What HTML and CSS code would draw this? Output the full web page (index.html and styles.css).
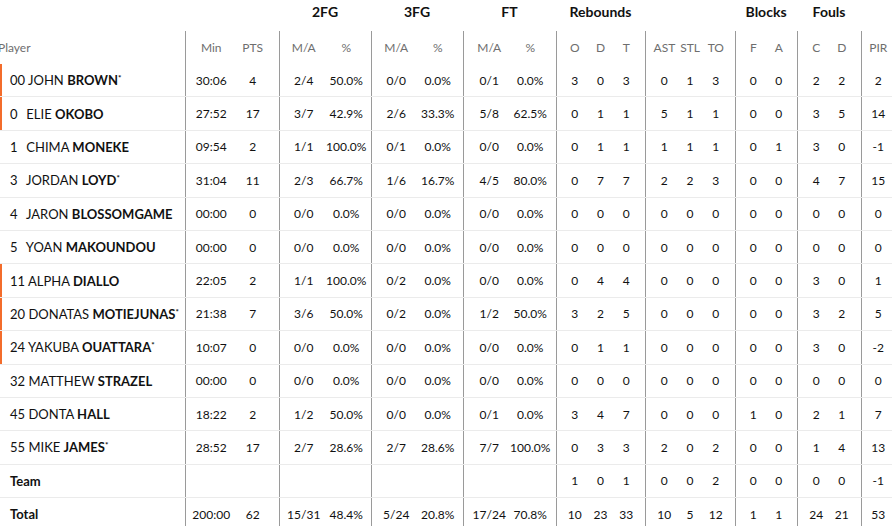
FILE: index.html
```html
<!DOCTYPE html>
<html lang="en">
<head>
<meta charset="utf-8">
<title>Box score</title>
<link rel="stylesheet" href="styles.css">
</head>
<body>
<table class="box">
  <colgroup>
    <col class="w-player">
    <col class="w47"><col class="w47">
    <col class="w46"><col class="w46">
    <col class="w46"><col class="w46">
    <col class="w47"><col class="w46">
    <col class="w30"><col class="w29"><col class="w30">
    <col class="w30"><col class="w30"><col class="w30">
    <col class="w31"><col class="w31">
    <col class="w32"><col class="w32">
    <col class="w40">
  </colgroup>
  <thead>
    <tr class="groups">
      <th></th>
      <th colspan="2"></th>
      <th colspan="2">2FG</th>
      <th colspan="2">3FG</th>
      <th colspan="2">FT</th>
      <th colspan="3">Rebounds</th>
      <th colspan="3"></th>
      <th colspan="2">Blocks</th>
      <th colspan="2">Fouls</th>
      <th></th>
    </tr>
    <tr class="labels">
      <th class="player">Player</th>
      <th>Min</th><th>PTS</th>
      <th>M/A</th><th>%</th>
      <th>M/A</th><th>%</th>
      <th>M/A</th><th>%</th>
      <th>O</th><th>D</th><th>T</th>
      <th>AST</th><th>STL</th><th>TO</th>
      <th>F</th><th>A</th>
      <th>C</th><th>D</th>
      <th>PIR</th>
    </tr>
  </thead>
  <tbody>
    <tr class="on">
      <td class="name"><span class="num">00</span> JOHN <b>BROWN</b><sup>*</sup></td>
      <td>30:06</td><td>4</td><td>2/4</td><td>50.0%</td><td>0/0</td><td>0.0%</td><td>0/1</td><td>0.0%</td>
      <td>3</td><td>0</td><td>3</td><td>0</td><td>1</td><td>3</td><td>0</td><td>0</td><td>2</td><td>2</td><td>2</td>
    </tr>
    <tr class="on">
      <td class="name"><span class="num">0</span> ELIE <b>OKOBO</b></td>
      <td>27:52</td><td>17</td><td>3/7</td><td>42.9%</td><td>2/6</td><td>33.3%</td><td>5/8</td><td>62.5%</td>
      <td>0</td><td>1</td><td>1</td><td>5</td><td>1</td><td>1</td><td>0</td><td>0</td><td>3</td><td>5</td><td>14</td>
    </tr>
    <tr>
      <td class="name"><span class="num">1</span> CHIMA <b>MONEKE</b></td>
      <td>09:54</td><td>2</td><td>1/1</td><td>100.0%</td><td>0/1</td><td>0.0%</td><td>0/0</td><td>0.0%</td>
      <td>0</td><td>1</td><td>1</td><td>1</td><td>1</td><td>1</td><td>0</td><td>1</td><td>3</td><td>0</td><td>-1</td>
    </tr>
    <tr>
      <td class="name"><span class="num">3</span> JORDAN <b>LOYD</b><sup>*</sup></td>
      <td>31:04</td><td>11</td><td>2/3</td><td>66.7%</td><td>1/6</td><td>16.7%</td><td>4/5</td><td>80.0%</td>
      <td>0</td><td>7</td><td>7</td><td>2</td><td>2</td><td>3</td><td>0</td><td>0</td><td>4</td><td>7</td><td>15</td>
    </tr>
    <tr>
      <td class="name"><span class="num">4</span> JARON <b>BLOSSOMGAME</b></td>
      <td>00:00</td><td>0</td><td>0/0</td><td>0.0%</td><td>0/0</td><td>0.0%</td><td>0/0</td><td>0.0%</td>
      <td>0</td><td>0</td><td>0</td><td>0</td><td>0</td><td>0</td><td>0</td><td>0</td><td>0</td><td>0</td><td>0</td>
    </tr>
    <tr>
      <td class="name"><span class="num">5</span> YOAN <b>MAKOUNDOU</b></td>
      <td>00:00</td><td>0</td><td>0/0</td><td>0.0%</td><td>0/0</td><td>0.0%</td><td>0/0</td><td>0.0%</td>
      <td>0</td><td>0</td><td>0</td><td>0</td><td>0</td><td>0</td><td>0</td><td>0</td><td>0</td><td>0</td><td>0</td>
    </tr>
    <tr class="on">
      <td class="name"><span class="num">11</span> ALPHA <b>DIALLO</b></td>
      <td>22:05</td><td>2</td><td>1/1</td><td>100.0%</td><td>0/2</td><td>0.0%</td><td>0/0</td><td>0.0%</td>
      <td>0</td><td>4</td><td>4</td><td>0</td><td>0</td><td>0</td><td>0</td><td>0</td><td>3</td><td>0</td><td>1</td>
    </tr>
    <tr class="on">
      <td class="name"><span class="num">20</span> DONATAS <b>MOTIEJUNAS</b><sup>*</sup></td>
      <td>21:38</td><td>7</td><td>3/6</td><td>50.0%</td><td>0/2</td><td>0.0%</td><td>1/2</td><td>50.0%</td>
      <td>3</td><td>2</td><td>5</td><td>0</td><td>0</td><td>0</td><td>0</td><td>0</td><td>3</td><td>2</td><td>5</td>
    </tr>
    <tr class="on">
      <td class="name"><span class="num">24</span> YAKUBA <b>OUATTARA</b><sup>*</sup></td>
      <td>10:07</td><td>0</td><td>0/0</td><td>0.0%</td><td>0/0</td><td>0.0%</td><td>0/0</td><td>0.0%</td>
      <td>0</td><td>1</td><td>1</td><td>0</td><td>0</td><td>0</td><td>0</td><td>0</td><td>3</td><td>0</td><td>-2</td>
    </tr>
    <tr>
      <td class="name"><span class="num">32</span> MATTHEW <b>STRAZEL</b></td>
      <td>00:00</td><td>0</td><td>0/0</td><td>0.0%</td><td>0/0</td><td>0.0%</td><td>0/0</td><td>0.0%</td>
      <td>0</td><td>0</td><td>0</td><td>0</td><td>0</td><td>0</td><td>0</td><td>0</td><td>0</td><td>0</td><td>0</td>
    </tr>
    <tr>
      <td class="name"><span class="num">45</span> DONTA <b>HALL</b></td>
      <td>18:22</td><td>2</td><td>1/2</td><td>50.0%</td><td>0/0</td><td>0.0%</td><td>0/1</td><td>0.0%</td>
      <td>3</td><td>4</td><td>7</td><td>0</td><td>0</td><td>0</td><td>1</td><td>0</td><td>2</td><td>1</td><td>7</td>
    </tr>
    <tr>
      <td class="name"><span class="num">55</span> MIKE <b>JAMES</b><sup>*</sup></td>
      <td>28:52</td><td>17</td><td>2/7</td><td>28.6%</td><td>2/7</td><td>28.6%</td><td>7/7</td><td>100.0%</td>
      <td>0</td><td>3</td><td>3</td><td>2</td><td>0</td><td>2</td><td>0</td><td>0</td><td>1</td><td>4</td><td>13</td>
    </tr>
    <tr>
      <td class="name"><b>Team</b></td>
      <td></td><td></td><td></td><td></td><td></td><td></td><td></td><td></td>
      <td>1</td><td>0</td><td>1</td><td>0</td><td>0</td><td>2</td><td>0</td><td>0</td><td>0</td><td>0</td><td>-1</td>
    </tr>
    <tr>
      <td class="name"><b>Total</b></td>
      <td>200:00</td><td>62</td><td>15/31</td><td>48.4%</td><td>5/24</td><td>20.8%</td><td>17/24</td><td>70.8%</td>
      <td>10</td><td>23</td><td>33</td><td>10</td><td>5</td><td>12</td><td>1</td><td>1</td><td>24</td><td>21</td><td>53</td>
    </tr>
  </tbody>
</table>
</body>
</html>
```

FILE: styles.css
```css
html, body {
  margin: 0;
  padding: 0;
  background: #fff;
  overflow: hidden;
}

body {
  font-family: Lato, "Liberation Sans", sans-serif;
  color: #111;
}

.box {
  border-collapse: collapse;
  table-layout: fixed;
  width: 901px;
}

.w-player { width: 185px; }
.w47 { width: 47px; }
.w46 { width: 46px; }
.w40 { width: 40px; }
.w32 { width: 32px; }
.w31 { width: 31px; }
.w30 { width: 30px; }
.w29 { width: 29px; }

.box th,
.box td {
  padding: 0;
  text-align: center;
  white-space: nowrap;
}

/* group header row */
.groups th {
  height: 28px;
  padding-top: 3px;
  font-size: 14px;
  line-height: 17px;
  font-weight: 700;
  color: #111;
  vertical-align: top;
}

/* labels row */
.labels th {
  height: 33px;
  font-size: 12px;
  font-weight: 400;
  color: #6e6e6e;
}

.labels th.player {
  text-align: left;
  text-indent: -2px;
}

/* body rows */
.box tbody td {
  height: 32.4px;
  font-size: 12px;
  border-bottom: 1px solid #ebebeb;
}

.box td.name {
  text-align: left;
  padding-left: 10px;
  font-size: 13px;
}

.name b {
  font-weight: 700;
}

.num {
  display: inline-block;
  min-width: 13px;
}

.name sup {
  font-size: 8px;
  font-weight: 700;
  vertical-align: 4px;
}

.on td.name {
  background: linear-gradient(to right, #f36c2b 0, #f36c2b 2.5px, transparent 2.5px);
}

/* vertical group dividers */
.labels th:nth-child(2), .box tbody td:nth-child(2),
.labels th:nth-child(4), .box tbody td:nth-child(4),
.labels th:nth-child(6), .box tbody td:nth-child(6),
.labels th:nth-child(8), .box tbody td:nth-child(8),
.labels th:nth-child(10), .box tbody td:nth-child(10),
.labels th:nth-child(13), .box tbody td:nth-child(13),
.labels th:nth-child(16), .box tbody td:nth-child(16),
.labels th:nth-child(18), .box tbody td:nth-child(18),
.labels th:nth-child(20), .box tbody td:nth-child(20) {
  border-left: 1px solid #9a9a9a;
}

/* group inner padding to place column centers */
.labels th:nth-child(2), .box tbody td:nth-child(2) { padding-left: 5px; }
.labels th:nth-child(3), .box tbody td:nth-child(3) { padding-right: 5px; }
.labels th:nth-child(4), .box tbody td:nth-child(4) { padding-left: 3px; }
.labels th:nth-child(5), .box tbody td:nth-child(5) { padding-right: 3px; }
.labels th:nth-child(6), .box tbody td:nth-child(6) { padding-left: 4px; }
.labels th:nth-child(7), .box tbody td:nth-child(7) { padding-right: 4px; }
.labels th:nth-child(8), .box tbody td:nth-child(8) { padding-left: 5px; }
.labels th:nth-child(9), .box tbody td:nth-child(9) { padding-right: 5px; }
.labels th:nth-child(10), .box tbody td:nth-child(10) { padding-left: 7px; }
.labels th:nth-child(12), .box tbody td:nth-child(12) { padding-right: 7px; }
.labels th:nth-child(13), .box tbody td:nth-child(13) { padding-left: 8px; }
.labels th:nth-child(15), .box tbody td:nth-child(15) { padding-right: 8px; }
.labels th:nth-child(16), .box tbody td:nth-child(16) { padding-left: 5px; }
.labels th:nth-child(17), .box tbody td:nth-child(17) { padding-right: 5px; }
.labels th:nth-child(18), .box tbody td:nth-child(18) { padding-left: 6px; }
.labels th:nth-child(19), .box tbody td:nth-child(19) { padding-right: 6px; }
.labels th:nth-child(20), .box tbody td:nth-child(20) { padding-right: 6px; }
```
